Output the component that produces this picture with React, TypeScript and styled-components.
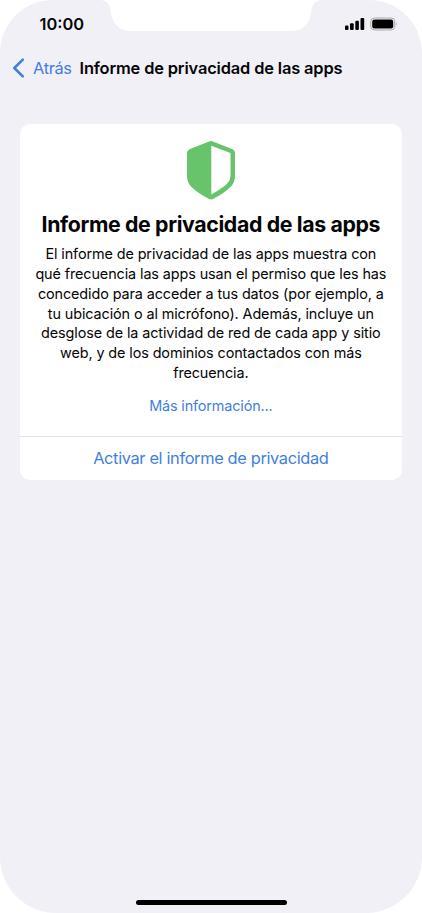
import React from "react";
import styled, { createGlobalStyle } from "styled-components";

const GlobalStyle = createGlobalStyle`
  * { box-sizing: border-box; }
  html, body { margin: 0; padding: 0; background: #fff; }
  body { font-family: Inter, "Liberation Sans", sans-serif; color: #050506; overflow: hidden; }
  button { font: inherit; border: 0; background: none; padding: 0; cursor: pointer; }
`;

const Screen = styled.main`
  position: relative;
  display: flex;
  flex-direction: column;
  width: 422px;
  height: 913px;
  overflow: hidden;
  background: #f1f0f6;
  border-radius: 53px 53px 56px 56px;
`;

const Notch = styled.svg`
  position: absolute;
  top: 0;
  left: 100px;
`;

const StatusBar = styled.header`
  display: flex;
  justify-content: space-between;
  align-items: center;
  height: 47px;
  padding: 0 25px 0 39.5px;
`;

const Time = styled.time`
  font-size: 16.4px;
  font-weight: 600;
  line-height: 20px;
  letter-spacing: 0;
`;

const StatusIcons = styled.svg`
  display: block;
`;

const NavBar = styled.nav`
  display: flex;
  align-items: center;
  height: 42px;
  padding-left: 12px;
`;

const BackButton = styled.button`
  display: flex;
  align-items: center;
  gap: 8px;
  width: 67.5px;
  color: #3f7fe0;
`;

const BackLabel = styled.span`
  font-size: 16.4px;
  line-height: 20px;
  letter-spacing: -0.35px;
`;

const NavTitle = styled.h1`
  margin: 0;
  font-size: 16.4px;
  font-weight: 600;
  line-height: 20px;
  letter-spacing: -0.14px;
  white-space: nowrap;
`;

const Card = styled.section`
  display: flex;
  flex-direction: column;
  margin: 35px 19.8px 0 19.5px;
  height: 356px;
  border-radius: 10px;
  background: #fff;
  overflow: hidden;
`;

const CardBody = styled.div`
  display: flex;
  flex-direction: column;
  align-items: center;
  height: 312px;
  padding-top: 16px;
`;

const CardTitle = styled.h2`
  margin: 11px 0 0;
  font-size: 21.3px;
  font-weight: 700;
  line-height: 26px;
  letter-spacing: -0.36px;
  white-space: nowrap;
`;

const Description = styled.p`
  margin: 7.4px 0 0;
  font-size: 14.4px;
  line-height: 19.7px;
  text-align: center;
`;

const Line = styled.span`
  display: block;
  white-space: nowrap;
  letter-spacing: -0.1px;
`;

const MoreLink = styled.button`
  margin-top: 13.6px;
  color: #3f7fe0;
  font-size: 14.4px;
  line-height: 20px;
  letter-spacing: -0.14px;
`;

const ActionButton = styled.button`
  flex: 1;
  padding-bottom: 2px;
  border-top: 1px solid #e4e4e7;
  color: #3f7fe0;
  font-size: 16.4px;
  line-height: 20px;
  letter-spacing: -0.36px;
`;

const HomeIndicator = styled.div`
  width: 151px;
  height: 5px;
  margin: auto auto 8px;
  border-radius: 3px;
  background: #000;
`;

const description = [
  "El informe de privacidad de las apps muestra con",
  "qué frecuencia las apps usan el permiso que les has",
  "concedido para acceder a tus datos (por ejemplo, a",
  "tu ubicación o al micrófono). Además, incluye un",
  "desglose de la actividad de red de cada app y sitio",
  "web, y de los dominios contactados con más",
  "frecuencia.",
];

const ShieldIcon = () => (
  <svg width="50" height="60" viewBox="0 0 50 60" aria-hidden="true">
    <path
      fill="#67c46a"
      fillRule="evenodd"
      d="M25 1 Q26 1 27.5 1.8 L46 9 Q49 10.2 49 13.5 V36 Q49 42.5 44.5 47 Q39 52.5 27.5 58.8 Q25 60.2 22.5 58.8 Q11 52.5 5.5 47 Q1 42.5 1 36 V13.5 Q1 10.2 4 9 L22.5 1.8 Q24 1 25 1 Z M25.3 5.8 V54.6 Q37.5 47.6 41.5 43.3 Q44.5 40.2 44.5 36 V12.9 Z"
    />
  </svg>
);

const App = () => (
  <>
    <GlobalStyle />
    <Screen>
      <Notch width="222" height="31" viewBox="0 0 222 31" aria-hidden="true">
        <path fill="#fff" d="M0 0 C6 0 10 4 10.5 10 C11.5 22 18 31 30 31 H192 C204 31 210.500 22 211.500 10 C212 4 216 0 222 0 Z" />
      </Notch>
      <StatusBar>
        <Time>10:00</Time>
        <StatusIcons width="52" height="14" viewBox="0 0 52 14" aria-label="Cobertura y batería">
          <rect x="0" y="8.500" width="3.500" height="4.500" rx="1" />
          <rect x="5" y="6.300" width="3.700" height="6.700" rx="1" />
          <rect x="10.300" y="3.700" width="3.600" height="9.300" rx="1" />
          <rect x="15.500" y="1" width="3.700" height="12" rx="1" />
          <rect x="25.700" y="1" width="24" height="12" rx="3.700" fill="none" stroke="#a9a9ac" />
          <rect x="27.200" y="2.600" width="21" height="8.900" rx="2.200" />
          <path d="M50.800 5 Q52.300 7 50.800 9 Z" fill="#a9a9ac" />
        </StatusIcons>
      </StatusBar>
      <NavBar>
        <BackButton>
          <svg width="13" height="20" viewBox="0 0 13 20" fill="none" aria-hidden="true">
            <path d="M10.800 1.700 L2.300 10 L10.800 18.300" stroke="#3f7fe0" strokeWidth="2.500" strokeLinecap="round" strokeLinejoin="round" />
          </svg>
          <BackLabel>Atrás</BackLabel>
        </BackButton>
        <NavTitle>Informe de privacidad de las apps</NavTitle>
      </NavBar>
      <Card>
        <CardBody>
          <ShieldIcon />
          <CardTitle>Informe de privacidad de las apps</CardTitle>
          <Description>
            {description.map((text) => (
              <Line key={text}>{text}</Line>
            ))}
          </Description>
          <MoreLink>Más información...</MoreLink>
        </CardBody>
        <ActionButton>Activar el informe de privacidad</ActionButton>
      </Card>
      <HomeIndicator />
    </Screen>
  </>
);

export default App;
